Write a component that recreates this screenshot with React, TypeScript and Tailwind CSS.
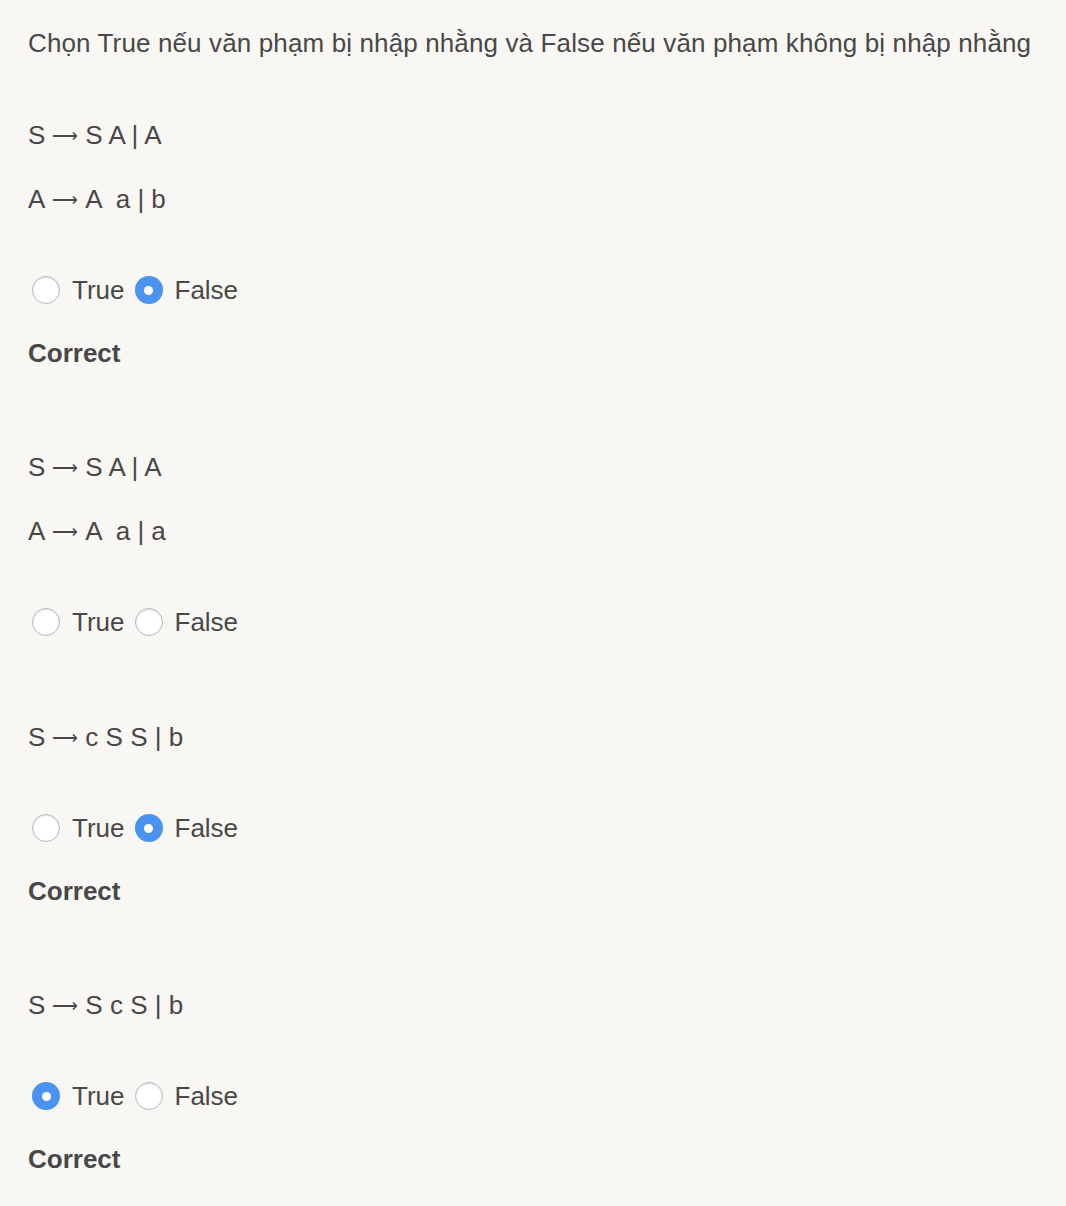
import React from 'react';

type Question = {
  lhs: string[];
  rhs: string[];
  selected: 'true' | 'false' | null;
  correct: boolean;
  gap: string;
};

const questions: Question[] = [
  { lhs: ['S', 'A'], rhs: ['S A | A', 'A  a | b'], selected: 'false', correct: true, gap: 'mt-[52px]' },
  { lhs: ['S', 'A'], rhs: ['S A | A', 'A  a | a'], selected: null, correct: false, gap: 'mt-[74px]' },
  { lhs: ['S'], rhs: ['c S S | b'], selected: 'false', correct: true, gap: 'mt-[75px]' },
  { lhs: ['S'], rhs: ['S c S | b'], selected: 'true', correct: true, gap: 'mt-[74px]' },
];

const Radio = ({ checked }: { checked: boolean }) =>
  checked ? (
    <span className="flex h-[28px] w-[28px] shrink-0 items-center justify-center rounded-full bg-[#4a93f0]">
      <span className="block h-[9px] w-[9px] rounded-full bg-white" />
    </span>
  ) : (
    <span className="block h-[28px] w-[28px] shrink-0 rounded-full border border-[#b9b9b9] bg-white shadow-[inset_0_1px_2px_rgba(0,0,0,0.12)]" />
  );

export default function App() {
  return (
    <div className="min-h-[1206px] bg-[#f8f7f3] px-[28px] pt-[23px] text-[26px] text-[#484848] [font-family:'Liberation_Sans',Arial,sans-serif]">
      <p className="h-[40px] leading-[40px] tracking-[0.13px]">
        Chọn True nếu văn phạm bị nhập nhằng và False nếu văn phạm không bị nhập nhằng
      </p>
      {questions.map((q, i) => (
        <div key={i} className={q.gap}>
          {q.lhs.map((l, j) => (
            <p key={j} className={`flex h-[40px] items-center whitespace-pre leading-[40px] ${j > 0 ? 'mt-[24px]' : ''}`}>
              <span>{l}</span>
              <span className="inline-block w-[40px] shrink-0 pl-[7px] pt-[2px] text-left text-[18px] font-extralight leading-[40px] [font-family:'DejaVu_Sans',sans-serif]">
                ⟶
              </span>
              <span>{q.rhs[j]}</span>
            </p>
          ))}
          <div className="mt-[51px] flex h-[40px] items-center">
            <span className="ml-[4px]">
              <Radio checked={q.selected === 'true'} />
            </span>
            <span className="ml-[12px]">True</span>
            <span className="ml-[10px]">
              <Radio checked={q.selected === 'false'} />
            </span>
            <span className="ml-[12px]">False</span>
          </div>
          {q.correct && <p className="mt-[23px] h-[40px] font-bold leading-[40px]">Correct</p>}
        </div>
      ))}
    </div>
  );
}
